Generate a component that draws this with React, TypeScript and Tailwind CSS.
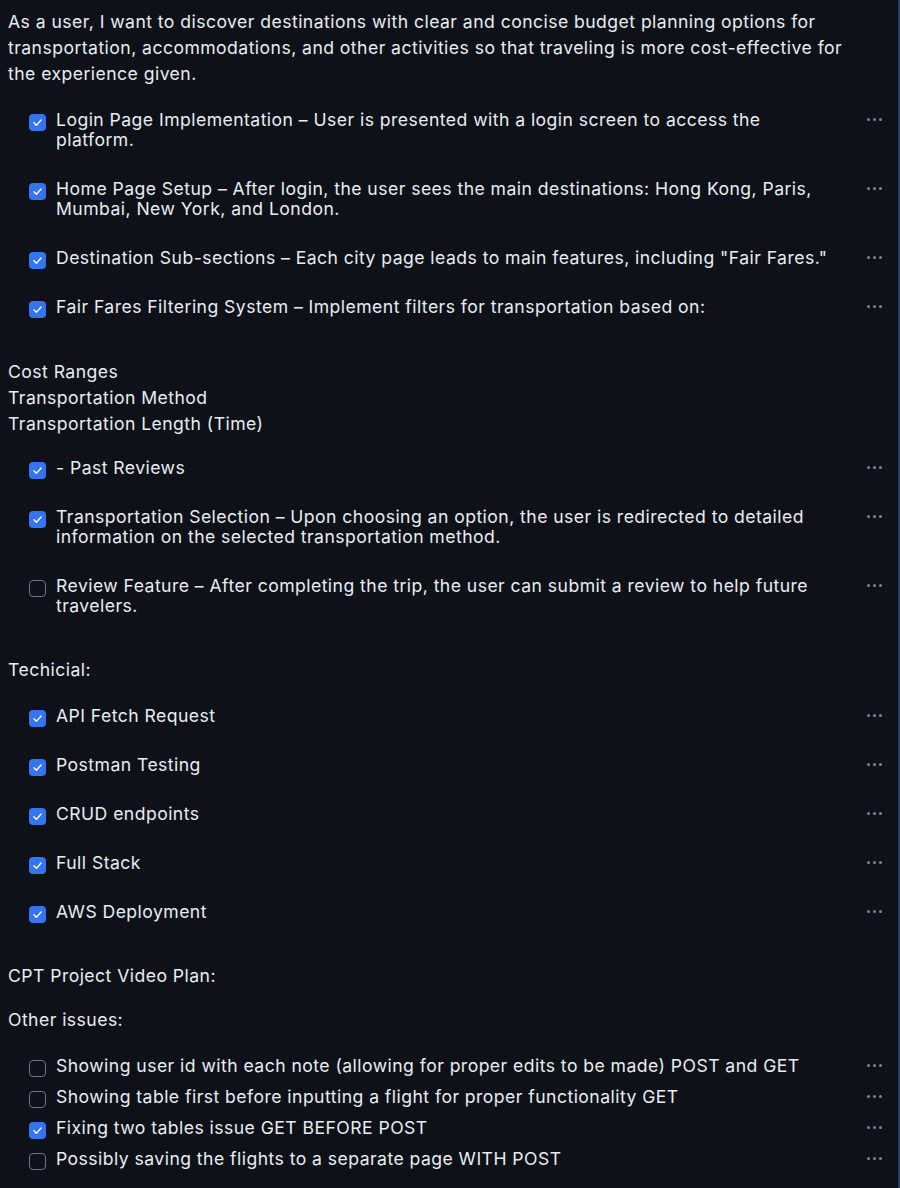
import React from "react";

type Item = { checked: boolean; lines: string[] };

const Checkbox = ({ checked }: { checked: boolean }) =>
  checked ? (
    <span className="mt-[4px] -mb-[1px] flex h-[17px] w-[17px] shrink-0 items-center justify-center rounded-[4px] bg-[#3574f0]">
      <svg viewBox="0 0 16 16" className="h-[13px] w-[13px]">
        <path
          d="M3.6 8.4l3 3.1 5.8-6.6"
          stroke="white"
          strokeWidth="1.7"
          fill="none"
          strokeLinecap="round"
          strokeLinejoin="round"
        />
      </svg>
    </span>
  ) : (
    <span className="mt-[4px] -mb-[1px] block h-[17px] w-[17px] shrink-0 rounded-[4px] border border-[#6e7681]" />
  );

const Dots = () => (
  <span className="-mt-[1px] flex h-[20px] w-[15px] shrink-0 items-center justify-between">
    <span className="h-[3px] w-[3px] rounded-full bg-[#7d8590]" />
    <span className="h-[3px] w-[3px] rounded-full bg-[#7d8590]" />
    <span className="h-[3px] w-[3px] rounded-full bg-[#7d8590]" />
  </span>
);

const TaskRow = ({ item, compact }: { item: Item; compact?: boolean }) => (
  <li className={`flex items-start ${compact ? "pt-[6px] pb-[5px]" : "pt-[15px] pb-[14px]"}`}>
    <span className="ml-[21px] flex h-[20px] shrink-0 items-start">
      <Checkbox checked={item.checked} />
    </span>
    <span className="ml-[10px] flex-1 leading-[20px] whitespace-nowrap">
      {item.lines.map((l, i) => (
        <React.Fragment key={i}>
          {i > 0 && <br />}
          {l}
        </React.Fragment>
      ))}
    </span>
    <Dots />
  </li>
);

const list1: Item[] = [
  {
    checked: true,
    lines: ["Login Page Implementation – User is presented with a login screen to access the", "platform."],
  },
  {
    checked: true,
    lines: [
      "Home Page Setup – After login, the user sees the main destinations: Hong Kong, Paris,",
      "Mumbai, New York, and London.",
    ],
  },
  {
    checked: true,
    lines: ['Destination Sub-sections – Each city page leads to main features, including "Fair Fares."'],
  },
  { checked: true, lines: ["Fair Fares Filtering System – Implement filters for transportation based on:"] },
];

const list2: Item[] = [
  { checked: true, lines: ["- Past Reviews"] },
  {
    checked: true,
    lines: [
      "Transportation Selection – Upon choosing an option, the user is redirected to detailed",
      "information on the selected transportation method.",
    ],
  },
  {
    checked: false,
    lines: ["Review Feature – After completing the trip, the user can submit a review to help future", "travelers."],
  },
];

const list3: Item[] = [
  { checked: true, lines: ["API Fetch Request"] },
  { checked: true, lines: ["Postman Testing"] },
  { checked: true, lines: ["CRUD endpoints"] },
  { checked: true, lines: ["Full Stack"] },
  { checked: true, lines: ["AWS Deployment"] },
];

const list4: Item[] = [
  { checked: false, lines: ["Showing user id with each note (allowing for proper edits to be made) POST and GET"] },
  { checked: false, lines: ["Showing table first before inputting a flight for proper functionality GET"] },
  { checked: true, lines: ["Fixing two tables issue GET BEFORE POST"] },
  { checked: false, lines: ["Possibly saving the flights to a separate page WITH POST"] },
];

export default function App() {
  return (
    <div
      className="min-h-[1188px] w-[900px] overflow-hidden border-r-2 border-[#203c6e] bg-[#0e1117] pt-[9px] pr-[16px] pl-[8px] text-[17.6px] tracking-[0.45px] text-[#e8edf2]"
      style={{ fontFamily: "Inter, 'Noto Sans', sans-serif" }}
    >
      <p className="leading-[26px] whitespace-nowrap">
        As a user, I want to discover destinations with clear and concise budget planning options for
        <br />
        transportation, accommodations, and other activities so that traveling is more cost-effective for
        <br />
        the experience given.
      </p>

      <ul className="mt-[8px]">
        {list1.map((it, i) => (
          <TaskRow key={i} item={it} />
        ))}
      </ul>

      <div className="mt-[28px] leading-[26px]">
        <div>Cost Ranges</div>
        <div>Transportation Method</div>
        <div>Transportation Length (Time)</div>
      </div>

      <ul className="mt-[6px]">
        {list2.map((it, i) => (
          <TaskRow key={i} item={it} />
        ))}
      </ul>

      <p className="mt-[27px] leading-[26px]">Techicial:</p>

      <ul className="mt-[8px]">
        {list3.map((it, i) => (
          <TaskRow key={i} item={it} />
        ))}
      </ul>

      <p className="mt-[27px] leading-[26px]">CPT Project Video Plan:</p>
      <p className="mt-[18px] leading-[26px]">Other issues:</p>

      <ul className="mt-[17px]">
        {list4.map((it, i) => (
          <TaskRow key={i} item={it} compact />
        ))}
      </ul>
    </div>
  );
}
